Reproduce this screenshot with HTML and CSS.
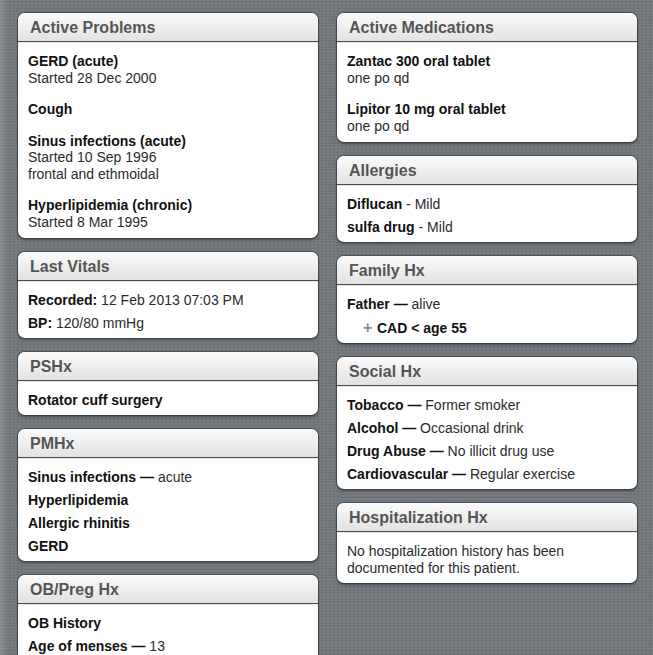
FILE: index.html
```html
<!DOCTYPE html>
<html>
<head>
<meta charset="utf-8">
<link rel="stylesheet" href="styles.css">
</head>
<body>
<div class="page">
  <div class="col">
    <section class="card">
      <h2 class="card-head">Active Problems</h2>
      <div class="card-body groups">
        <div class="group"><div class="b">GERD (acute)</div><div>Started 28 Dec 2000</div></div>
        <div class="group"><div class="b">Cough</div></div>
        <div class="group"><div class="b">Sinus infections (acute)</div><div>Started 10 Sep 1996</div><div>frontal and ethmoidal</div></div>
        <div class="group"><div class="b">Hyperlipidemia (chronic)</div><div>Started 8 Mar 1995</div></div>
      </div>
    </section>
    <section class="card">
      <h2 class="card-head">Last Vitals</h2>
      <div class="card-body rows">
        <div class="row"><span class="b">Recorded:</span> 12 Feb 2013 07:03 PM</div>
        <div class="row"><span class="b">BP:</span> 120/80 mmHg</div>
      </div>
    </section>
    <section class="card">
      <h2 class="card-head">PSHx</h2>
      <div class="card-body rows">
        <div class="row b">Rotator cuff surgery</div>
      </div>
    </section>
    <section class="card">
      <h2 class="card-head">PMHx</h2>
      <div class="card-body rows">
        <div class="row"><span class="b">Sinus infections &mdash;</span> acute</div>
        <div class="row b">Hyperlipidemia</div>
        <div class="row b">Allergic rhinitis</div>
        <div class="row b">GERD</div>
      </div>
    </section>
    <section class="card">
      <h2 class="card-head">OB/Preg Hx</h2>
      <div class="card-body rows">
        <div class="row b">OB History</div>
        <div class="row"><span class="b">Age of menses &mdash;</span> 13</div>
      </div>
    </section>
  </div>
  <div class="col">
    <section class="card">
      <h2 class="card-head">Active Medications</h2>
      <div class="card-body groups">
        <div class="group"><div class="b">Zantac 300 oral tablet</div><div>one po qd</div></div>
        <div class="group"><div class="b">Lipitor 10 mg oral tablet</div><div>one po qd</div></div>
      </div>
    </section>
    <section class="card">
      <h2 class="card-head">Allergies</h2>
      <div class="card-body rows">
        <div class="row"><span class="b">Diflucan</span> - Mild</div>
        <div class="row"><span class="b">sulfa drug</span> - Mild</div>
      </div>
    </section>
    <section class="card">
      <h2 class="card-head">Family Hx</h2>
      <div class="card-body rows">
        <div class="row"><span class="b">Father &mdash;</span> alive</div>
        <div class="row sub"><span class="plus">+</span><span class="b">CAD &lt; age 55</span></div>
      </div>
    </section>
    <section class="card">
      <h2 class="card-head">Social Hx</h2>
      <div class="card-body rows">
        <div class="row"><span class="b">Tobacco &mdash;</span> Former smoker</div>
        <div class="row"><span class="b">Alcohol &mdash;</span> Occasional drink</div>
        <div class="row"><span class="b">Drug Abuse &mdash;</span> No illicit drug use</div>
        <div class="row"><span class="b">Cardiovascular &mdash;</span> Regular exercise</div>
      </div>
    </section>
    <section class="card">
      <h2 class="card-head">Hospitalization Hx</h2>
      <div class="card-body text">
        No hospitalization history has been documented for this patient.
      </div>
    </section>
  </div>
</div>
</body>
</html>
```

FILE: styles.css
```css
html, body {
  margin: 0;
  padding: 0;
  height: 100%;
  overflow: hidden;
}
body {
  font-family: "Liberation Sans", Arial, sans-serif;
  background-color: #72777c;
  background-image:
    linear-gradient(90deg, rgba(255,255,255,0.16) 0, rgba(255,255,255,0.08) 5px, rgba(255,255,255,0) 8px),
    repeating-linear-gradient(0deg, rgba(255,255,255,0.035) 0 1px, rgba(0,0,0,0.03) 1px 2px, rgba(0,0,0,0) 2px 3px),
    repeating-linear-gradient(90deg, rgba(255,255,255,0.03) 0 1px, rgba(0,0,0,0.035) 1px 2px, rgba(0,0,0,0) 2px 4px);
}
.page {
  display: flex;
  gap: 19px;
  padding: 13px 16px 0 18px;
  align-items: flex-start;
}
.col {
  width: 300px;
  display: flex;
  flex-direction: column;
  gap: 14px;
}
.card {
  background: #fff;
  border-radius: 7px;
  box-shadow: 0 0 0 1px rgba(40,44,48,0.55), 0 2px 3px rgba(0,0,0,0.35);
  overflow: hidden;
}
.card-head {
  margin: 0;
  height: 28px;
  line-height: 29px;
  padding: 0 12px;
  font-size: 16px;
  font-weight: bold;
  color: #555;
  background: linear-gradient(#fbfbfb, #ececec 60%, #e2e2e2);
  border-bottom: 1px solid #4b4b4b;
  box-shadow: 0 1px 0 #e6e6e6;
}
.card-body {
  font-size: 14px;
  color: #2b2b2b;
  padding: 0 10px;
}
.b {
  font-weight: bold;
  color: #111;
}
.groups {
  padding-top: 11px;
  padding-bottom: 8px;
  display: flex;
  flex-direction: column;
  gap: 15px;
  line-height: 16.5px;
}
.rows {
  padding-top: 8px;
  padding-bottom: 3px;
}
.row {
  line-height: 23px;
  white-space: nowrap;
}
.row.sub {
  padding-left: 16px;
}
.plus {
  display: inline-block;
  width: 14px;
  color: #8a8a8a;
  font-weight: bold;
  font-size: 16px;
}
.text {
  padding-top: 11px;
  padding-bottom: 7px;
  line-height: 16.5px;
  padding-right: 40px;
}
```
